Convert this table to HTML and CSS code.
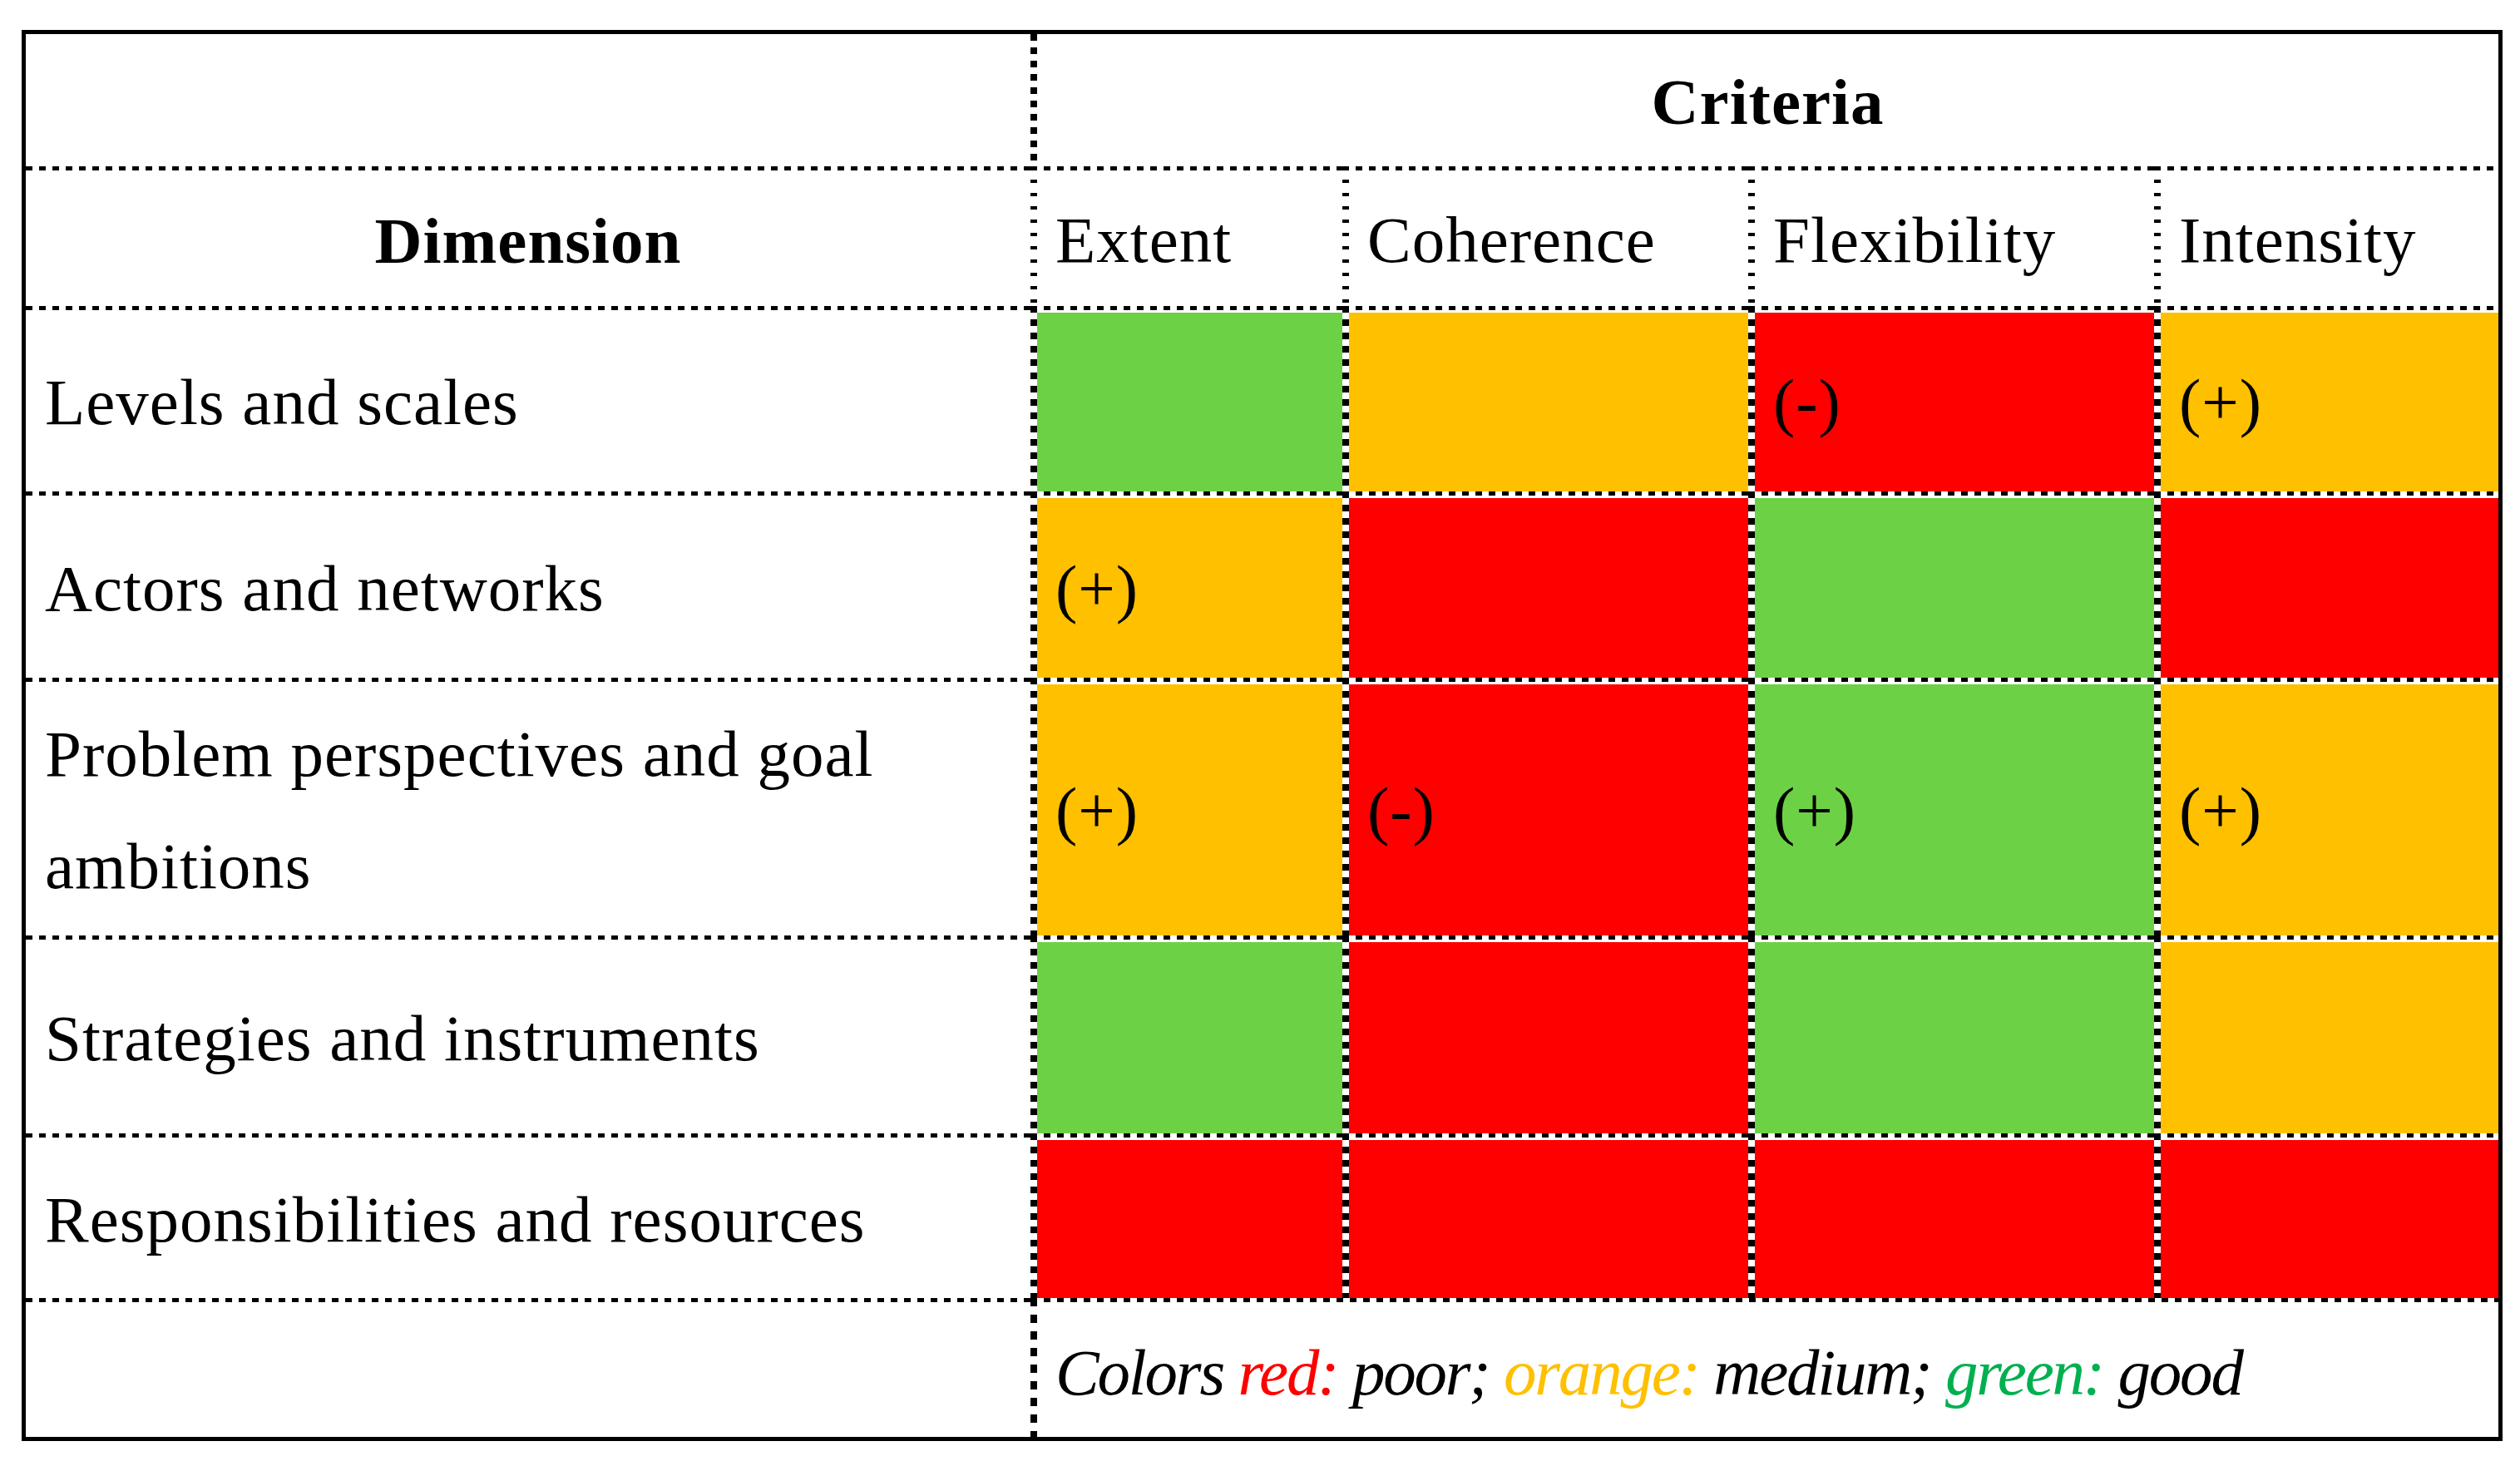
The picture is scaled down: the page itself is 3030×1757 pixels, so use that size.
FILE: index.html
```html
<!DOCTYPE html>
<html lang="en">
<head>
<meta charset="utf-8">
<title>Criteria by dimension</title>
<link rel="stylesheet" href="styles.css">
</head>
<body>
<div class="table">
  <div class="cell first no-top"></div>
  <div class="cell crit no-top vl-top">Criteria</div>

  <div class="cell first dim">Dimension</div>
  <div class="cell vl-head">Extent</div>
  <div class="cell vl-head">Coherence</div>
  <div class="cell vl-head">Flexibility</div>
  <div class="cell vl-head">Intensity</div>

  <div class="cell first">Levels and scales</div>
  <div class="cell vl g"></div>
  <div class="cell vl o"></div>
  <div class="cell vl r">(-)</div>
  <div class="cell vl o">(+)</div>

  <div class="cell first">Actors and networks</div>
  <div class="cell vl o">(+)</div>
  <div class="cell vl r"></div>
  <div class="cell vl g"></div>
  <div class="cell vl r"></div>

  <div class="cell first">Problem perspectives and goal ambitions</div>
  <div class="cell vl o">(+)</div>
  <div class="cell vl r">(-)</div>
  <div class="cell vl g">(+)</div>
  <div class="cell vl o">(+)</div>

  <div class="cell first">Strategies and instruments</div>
  <div class="cell vl g"></div>
  <div class="cell vl r"></div>
  <div class="cell vl g"></div>
  <div class="cell vl o"></div>

  <div class="cell first">Responsibilities and resources</div>
  <div class="cell vl r"></div>
  <div class="cell vl r"></div>
  <div class="cell vl r"></div>
  <div class="cell vl r"></div>

  <div class="cell first"></div>
  <div class="cell vl-legend legend"><p class="legend-text">Colors <span class="t-red">red:</span> poor; <span class="t-orange">orange:</span> medium; <span class="t-green">green:</span> good</p></div>
</div>
</body>
</html>
```
FILE: styles.css
```css
html, body {
  margin: 0;
  background: #ffffff;
}

body {
  padding: 36px 0 0 26px;
  font-family: "Liberation Serif", "Times New Roman", serif;
  color: #000;
}

.table {
  display: grid;
  width: max-content;
  grid-template-columns: 1208px 375px 488px 488px 414px;
  grid-template-rows: 159px 168px 223px 224px 310px 238px 198px 167px;
  border: 5px solid #000;
}

.cell {
  --top: repeating-linear-gradient(90deg, #000 0 8px, transparent 8px 16px);
  --left: none;
  --fill: transparent;
  display: flex;
  align-items: center;
  box-sizing: border-box;
  padding: 8px 20px 0 30px;
  font-size: 79px;
  line-height: 135px;
  letter-spacing: 1px;
  background:
    var(--top) 0 0 / 100% 5px no-repeat,
    var(--left) 0 0 / 8px 100% no-repeat,
    linear-gradient(var(--fill), var(--fill)) 8px 8px / calc(100% - 8px) calc(100% - 8px) no-repeat;
}

.first {
  padding-left: 23px;
}

.no-top {
  --top: none;
  padding-top: 2px;
}

.vl {
  --left: repeating-linear-gradient(180deg, #000 0 8px, transparent 8px 16px);
}

.vl-head {
  --left: repeating-linear-gradient(180deg, #000 0 4px, transparent 4px 16px);
}

.vl-top {
  --left: repeating-linear-gradient(180deg, #000 0 8px, transparent 8px 16px);
}

.vl-legend {
  --left: repeating-linear-gradient(180deg, #000 0 10px, transparent 10px 20px);
}

.g { --fill: #6dd145; }
.o { --fill: #ffc000; }
.r { --fill: #ff0000; }

.crit {
  grid-column: 2 / 6;
  justify-content: center;
  padding: 4px 0 0 8px;
  font-weight: bold;
}

.dim {
  justify-content: center;
  padding: 10px 0 0 0;
  font-weight: bold;
}

.legend {
  grid-column: 2 / 6;
  font-style: italic;
  padding-top: 12px;
}

.legend-text {
  margin: 0;
  letter-spacing: -2.2px;
  word-spacing: 0;
}

.t-red { color: #ff0000; }
.t-orange { color: #ffc000; }
.t-green { color: #00b050; }
```
